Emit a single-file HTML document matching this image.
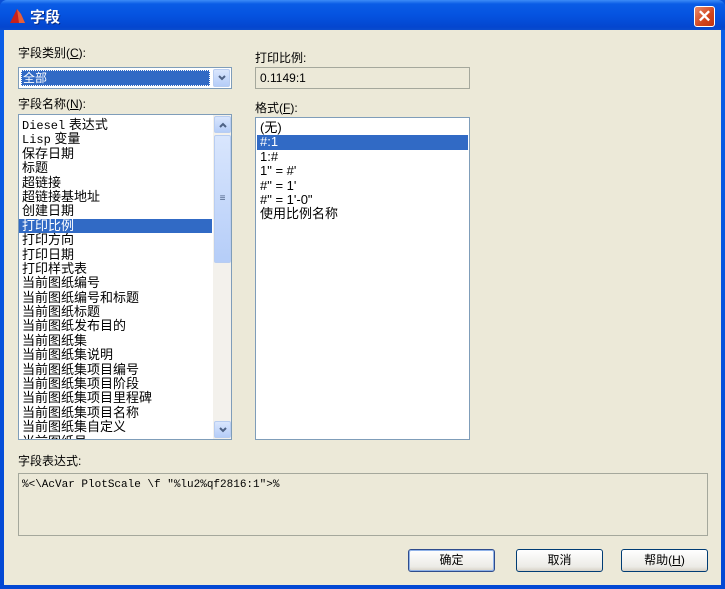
<!DOCTYPE html>
<html><head><meta charset="utf-8"><style>
*{margin:0;padding:0;box-sizing:border-box}
body{width:725px;height:589px;overflow:hidden;font-family:"Liberation Sans","Noto Sans CJK SC","WenQuanYi Zen Hei",sans-serif;font-size:12px;color:#000;position:relative;background:#0a4fd6}
.win{position:absolute;left:0;top:0;width:725px;height:589px;border-radius:7px 7px 0 0;background:linear-gradient(#0a5fe8,#0348d4);}
.title{position:absolute;left:0;top:0;width:725px;height:30px;background:linear-gradient(#3d8cf7 0,#0a5ce6 4px,#0553e0 50%,#0446cf 90%,#0a4ccd);border-radius:7px 7px 0 0}
.title span{position:absolute;left:30px;top:6px;color:#fff;font-weight:bold;font-size:15px;text-shadow:1px 1px #0a2a80}
.close{position:absolute;left:694px;top:6px;width:21px;height:21px;border:1px solid #fff;border-radius:3px;background:linear-gradient(135deg,#e98a6a,#d2441c 60%,#c03410);color:#fff;font-size:17px;font-weight:bold;text-align:center;line-height:19px}
.client{position:absolute;left:4px;top:30px;width:717px;height:555px;background:#ece9d8}
.a{position:absolute}
.lbl{position:absolute;font-size:12px}
.box{position:absolute;background:#fff;border:1px solid #7f9db9}
.sel{background:#316ac5;color:#fff}
.row{height:14.4px;line-height:14px;padding-left:3px;white-space:nowrap;font-size:13px}
.mono{font-family:"Liberation Mono",monospace;font-size:12px}
.sb{position:absolute;right:0;top:0;width:18px;height:100%;background:#f3f1ec}
.sbtn{position:absolute;left:1px;width:17px;height:17px;background:linear-gradient(#d9e6fd,#b5cdf8);border:1px solid #b8cdf1;border-radius:2px;color:#4d6185;font-size:10px;text-align:center;line-height:15px}
.sbtn svg{position:absolute;left:4px;top:5px}
.btn{position:absolute;top:519px;width:87px;height:23px;border:1px solid #003c74;border-radius:3px;background:linear-gradient(#fff,#ecebe6 80%,#d6d0c5);text-align:center;line-height:21px;font-size:12px}
</style></head><body>
<div class="win"></div>
<div class="title">
<svg class="a" style="left:8px;top:8px" width="18" height="16"><polygon points="2,15 9,1 13,6 17,15" fill="#c8211b"/><polygon points="9,1 13,6 17,15 11,15" fill="#e65f3a"/></svg>
<span>字段</span></div>
<div class="close">✕</div>
<div class="client">
<div class="lbl" style="left:14px;top:14px">字段类别(<u>C</u>):</div>
<div class="box" style="left:14px;top:37px;width:214px;height:22px">
 <div class="a sel" style="left:2px;top:2px;width:189px;height:16px;line-height:16px;padding-left:2px;outline:1px dotted #fff;outline-offset:-1px">全部</div>
 <div class="sbtn" style="left:194px;top:1px;height:18px"><svg width="8" height="6"><path d="M1 1L4 4L7 1" stroke="#4d6185" stroke-width="2" fill="none"/></svg></div>
</div>
<div class="lbl" style="left:14px;top:65px">字段名称(<u>N</u>):</div>
<div class="box" style="left:14px;top:84px;width:214px;height:326px;overflow:hidden">
 <div class="a" style="left:0;top:3px;width:193px">
 <div class="row"><span class="mono">Diesel</span> 表达式</div><div class="row"><span class="mono">Lisp</span> 变量</div><div class="row">保存日期</div><div class="row">标题</div><div class="row">超链接</div><div class="row">超链接基地址</div><div class="row">创建日期</div><div class="row sel">打印比例</div><div class="row">打印方向</div><div class="row">打印日期</div><div class="row">打印样式表</div><div class="row">当前图纸编号</div><div class="row">当前图纸编号和标题</div><div class="row">当前图纸标题</div><div class="row">当前图纸发布目的</div><div class="row">当前图纸集</div><div class="row">当前图纸集说明</div><div class="row">当前图纸集项目编号</div><div class="row">当前图纸集项目阶段</div><div class="row">当前图纸集项目里程碑</div><div class="row">当前图纸集项目名称</div><div class="row">当前图纸集自定义</div><div class="row">当前图纸号</div>
 </div>
 <div class="sb"><div class="sbtn" style="top:1px"><svg width="8" height="6"><path d="M1 5L4 2L7 5" stroke="#4d6185" stroke-width="2" fill="none"/></svg></div>
 <div class="sbtn" style="top:20px;height:128px;line-height:126px">≡</div>
 <div class="sbtn" style="bottom:1px"><svg width="8" height="6"><path d="M1 1L4 4L7 1" stroke="#4d6185" stroke-width="2" fill="none"/></svg></div></div>
</div>
<div class="lbl" style="left:251px;top:19px">打印比例:</div>
<div class="a" style="left:251px;top:37px;width:215px;height:22px;border:1px solid #a5a89c;background:#ece9d8;padding:3px 4px;font-size:12px" >0.1149:1</div>
<div class="lbl" style="left:251px;top:69px">格式(<u>F</u>):</div>
<div class="box" style="left:251px;top:87px;width:215px;height:323px">
 <div class="a" style="left:1px;top:3px;width:211px">
 <div class="row">(无)</div><div class="row sel">#:1</div><div class="row">1:#</div><div class="row">1" = #'</div><div class="row">#" = 1'</div><div class="row">#" = 1'-0"</div><div class="row">使用比例名称</div>
 </div>
</div>
<div class="lbl" style="left:14px;top:422px">字段表达式:</div>
<div class="a" style="left:14px;top:443px;width:690px;height:63px;border:1px solid #a5a89c;padding:5px 3px;font-family:'Liberation Mono',monospace;font-size:11px">%&lt;\AcVar PlotScale \f "%lu2%qf2816:1"&gt;%</div>
<div class="btn" style="left:404px;border-color:#2f4c8c;box-shadow:inset 0 0 0 1px #8fb2e8">确定</div>
<div class="btn" style="left:512px">取消</div>
<div class="btn" style="left:617px">帮助(<u>H</u>)</div>
</div>
</body></html>
